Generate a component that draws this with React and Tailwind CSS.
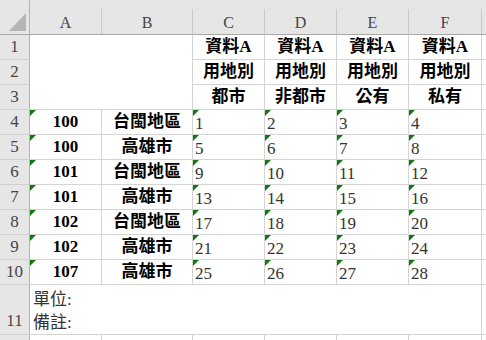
const cols = ['A', 'B', 'C', 'D', 'E', 'F'];

const heads = [
  ['資料A', '資料A', '資料A', '資料A'],
  ['用地別', '用地別', '用地別', '用地別'],
  ['都市', '非都市', '公有', '私有'],
];

const rows = [
  ['100', '台閩地區'],
  ['100', '高雄市'],
  ['101', '台閩地區'],
  ['101', '高雄市'],
  ['102', '台閩地區'],
  ['102', '高雄市'],
  ['107', '高雄市'],
];

const font = { fontFamily: '"Liberation Serif", "Noto Sans CJK TC", serif' };

function Flag() {
  return <span className="absolute left-0 top-0 h-0 w-0 border-t-[6px] border-r-[6px] border-t-[#127812] border-r-transparent" />;
}

function RowNum({ n, className = '' }) {
  return (
    <div className={`flex justify-center border-r border-b border-r-[#b4b4b4] border-b-[#d0d0d0] bg-[#e6e6e6] text-[17px] text-[#444] ${className}`}>
      {n}
    </div>
  );
}

export default function App() {
  return (
    <div className="h-[340px] w-[486px] overflow-hidden bg-white" style={font}>
      <div className="grid grid-cols-[30px_72px_91px_72px_72px_72px_73px_1fr] grid-rows-[35px_repeat(10,25px)_50px_1fr] h-[340px]">
        {/* column headers */}
        <div className="relative border-r border-b border-r-[#b4b4b4] border-b-[#a8a8a8] bg-[#e6e6e6]">
          <svg className="absolute left-[9px] top-[13px]" width="18" height="18" viewBox="0 0 18 18">
            <polygon points="17,0 17,18 0,18" fill="#b5b5b5" />
          </svg>
        </div>
        {cols.map((c) => (
          <div key={c} className="border-b border-b-[#a8a8a8] bg-[#e6e6e6] pt-[9px]">
            <div className="flex h-full items-center justify-center border-r border-r-[#c8c8c8] pt-[2px] text-[16px] text-[#444]">{c}</div>
          </div>
        ))}
        <div className="border-b border-b-[#a8a8a8] bg-[#e6e6e6]" />

        {/* rows 1-3 */}
        <RowNum n={1} className="items-center" />
        <div className="col-span-2 row-span-3 border-r border-b border-[#d4d4d4]" />
        {heads[0].map((t, i) => (
          <div key={i} className="flex items-center justify-center border-r border-b border-[#d4d4d4] text-[17px] font-bold text-black">{t}</div>
        ))}
        <div className="border-b border-[#d4d4d4]" />
        <RowNum n={2} className="items-center" />
        {heads[1].map((t, i) => (
          <div key={i} className="flex items-center justify-center border-r border-b border-[#d4d4d4] text-[17px] font-bold text-black">{t}</div>
        ))}
        <div className="border-b border-[#d4d4d4]" />
        <RowNum n={3} className="items-center" />
        {heads[2].map((t, i) => (
          <div key={i} className="flex items-center justify-center border-r border-b border-[#d4d4d4] text-[17px] font-bold text-black">{t}</div>
        ))}
        <div className="border-b border-[#d4d4d4]" />

        {/* data rows */}
        {rows.map((r, ri) => (
          <div key={ri} className="contents">
            <RowNum n={ri + 4} className="items-center" />
            <div className="relative flex items-center justify-center border-r border-b border-[#d4d4d4] text-[17px] font-bold text-black">
              <Flag />
              {r[0]}
            </div>
            <div className="flex items-center justify-center border-r border-b border-[#d4d4d4] text-[17px] font-bold text-black">{r[1]}</div>
            {[1, 2, 3, 4].map((k) => (
              <div key={k} className="relative flex items-center border-r border-b border-[#d4d4d4] pl-[2px] pt-[3px] text-[17px] text-[#333]">
                <Flag />
                {ri * 4 + k}
              </div>
            ))}
            <div className="border-b border-[#d4d4d4]" />
          </div>
        ))}

        {/* row 11 */}
        <RowNum n={11} className="items-end pb-[1px]" />
        <div className="col-span-6 flex flex-col justify-end border-r border-b border-[#d4d4d4] pl-[3px] text-[17px] leading-[23px] text-[#333]">
          <div>單位:</div>
          <div>備註:</div>
        </div>
        <div className="border-b border-[#d4d4d4]" />

        {/* partial row 12 */}
        <div className="border-r border-r-[#b4b4b4] bg-[#e6e6e6]" />
        {cols.map((c) => (
          <div key={c} className="border-r border-[#d4d4d4]" />
        ))}
        <div />
      </div>
    </div>
  );
}
